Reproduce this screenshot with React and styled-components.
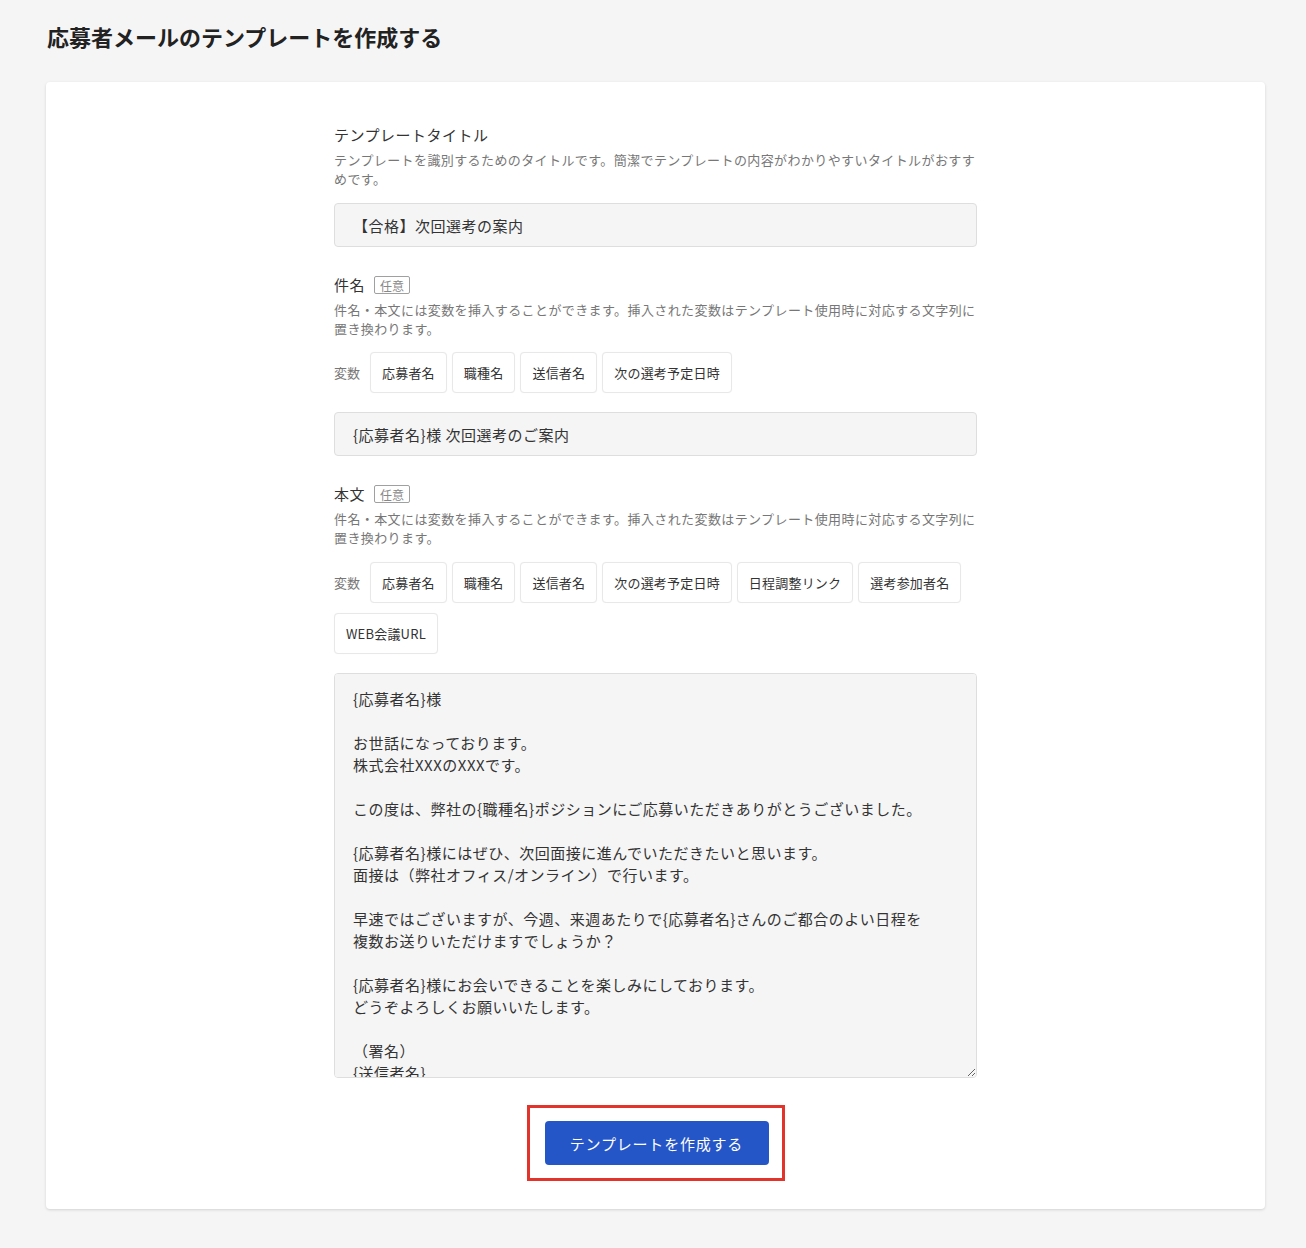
import React from "react";
import styled, { createGlobalStyle } from "styled-components";

const GlobalStyle = createGlobalStyle`
  html, body {
    margin: 0;
    padding: 0;
    background: #f5f5f5;
  }
  body {
    font-family: "Noto Sans CJK JP", "Noto Sans", "Liberation Sans", sans-serif;
    color: #333;
  }
  * { box-sizing: border-box; }
`;

const Page = styled.div`
  padding: 20px 41px 40px 46px;
  min-height: 1248px;
`;

const PageTitle = styled.h1`
  margin: 0 0 30px 1px;
  font-size: 22px;
  line-height: 32px;
  font-weight: 700;
  color: #222;
`;

const Card = styled.div`
  background: #fff;
  border-radius: 4px;
  box-shadow: 0 1px 3px rgba(0, 0, 0, 0.14);
  padding: 42px 0 28px;
  display: flex;
  flex-direction: column;
  align-items: center;
`;

const Form = styled.div`
  width: 643px;
  display: flex;
  flex-direction: column;
`;

const Section = styled.section`
  display: flex;
  flex-direction: column;
  & + & {
    margin-top: 27px;
  }
`;

const LabelRow = styled.div`
  display: flex;
  align-items: center;
  gap: 9px;
  height: 22px;
`;

const Label = styled.span`
  font-size: 15px;
  line-height: 22px;
  letter-spacing: 0.5px;
  color: #333;
`;

const Badge = styled.span`
  display: inline-flex;
  align-items: center;
  justify-content: center;
  width: 36px;
  height: 18px;
  border: 1px solid #a0a0a0;
  border-radius: 2px;
  font-size: 12px;
  color: #888;
`;

const Description = styled.p`
  margin: 4px 0 0;
  font-size: 13px;
  line-height: 19px;
  letter-spacing: 0.4px;
  color: #777;
`;

const TextInput = styled.div`
  margin-top: ${(p) => p.$top}px;
  height: 44px;
  display: flex;
  align-items: center;
  padding: 0 18px;
  background: #f5f5f5;
  border: 1px solid #dedede;
  border-radius: 4px;
  font-size: 15px;
  letter-spacing: 0.5px;
  color: #333;
`;

const VarRow = styled.div`
  margin-top: ${(p) => p.$top}px;
  display: flex;
  flex-wrap: wrap;
  align-items: center;
  column-gap: 5px;
  row-gap: 10px;
`;

const VarLabel = styled.span`
  font-size: 13px;
  color: #777;
  margin-right: 5px;
`;

const Chip = styled.button`
  height: 41px;
  padding: 0 11px;
  background: #fff;
  border: 1px solid #e8e8e8;
  border-radius: 4px;
  box-shadow: 0 0 1px rgba(0, 0, 0, 0.06);
  font-family: inherit;
  font-size: 13px;
  letter-spacing: 0.2px;
  color: #333;
  cursor: pointer;
`;

const BodyArea = styled.textarea`
  margin-top: 19px;
  height: 405px;
  width: 100%;
  padding: 14px 18px;
  background: #f5f5f5;
  border: 1px solid #dedede;
  border-radius: 4px;
  font-family: inherit;
  font-size: 15px;
  line-height: 22px;
  letter-spacing: 0.5px;
  color: #333;
  resize: vertical;
  outline: none;
  scrollbar-width: none;
  &::-webkit-scrollbar { display: none; }
`;

const Highlight = styled.div`
  margin-top: 27px;
  border: 3px solid #e3342b;
  padding: 13px 13px 13px 15px;
`;

const PrimaryButton = styled.button`
  width: 224px;
  height: 44px;
  border: none;
  border-radius: 4px;
  background: #2556c8;
  color: #fff;
  font-family: inherit;
  font-size: 15px;
  letter-spacing: 0.8px;
  cursor: pointer;
`;

const subjectVars = ["応募者名", "職種名", "送信者名", "次の選考予定日時"];
const bodyVars = [...subjectVars, "日程調整リンク", "選考参加者名", "WEB会議URL"];

const bodyText = `{応募者名}様

お世話になっております。
株式会社XXXのXXXです。

この度は、弊社の{職種名}ポジションにご応募いただきありがとうございました。

{応募者名}様にはぜひ、次回面接に進んでいただきたいと思います。
面接は（弊社オフィス/オンライン）で行います。

早速ではございますが、今週、来週あたりで{応募者名}さんのご都合のよい日程を
複数お送りいただけますでしょうか？

{応募者名}様にお会いできることを楽しみにしております。
どうぞよろしくお願いいたします。

（署名）
{送信者名}`;

const note =
  "件名・本文には変数を挿入することができます。挿入された変数はテンプレート使用時に対応する文字列に置き換わります。";

export default function App() {
  return (
    <>
      <GlobalStyle />
      <Page>
        <PageTitle>応募者メールのテンプレートを作成する</PageTitle>
        <Card>
          <Form>
            <Section>
              <LabelRow>
                <Label>テンプレートタイトル</Label>
              </LabelRow>
              <Description>
                テンプレートを識別するためのタイトルです。簡潔でテンプレートの内容がわかりやすいタイトルがおすすめです。
              </Description>
              <TextInput $top={15}>【合格】次回選考の案内</TextInput>
            </Section>

            <Section>
              <LabelRow>
                <Label>件名</Label>
                <Badge>任意</Badge>
              </LabelRow>
              <Description>{note}</Description>
              <VarRow $top={14}>
                <VarLabel>変数</VarLabel>
                {subjectVars.map((v) => (
                  <Chip key={v}>{v}</Chip>
                ))}
              </VarRow>
              <TextInput $top={19}>{"{応募者名}様 次回選考のご案内"}</TextInput>
            </Section>

            <Section>
              <LabelRow>
                <Label>本文</Label>
                <Badge>任意</Badge>
              </LabelRow>
              <Description>{note}</Description>
              <VarRow $top={15}>
                <VarLabel>変数</VarLabel>
                {bodyVars.map((v) => (
                  <Chip key={v}>{v}</Chip>
                ))}
              </VarRow>
              <BodyArea defaultValue={bodyText} />
            </Section>
          </Form>
          <Highlight>
            <PrimaryButton>テンプレートを作成する</PrimaryButton>
          </Highlight>
        </Card>
      </Page>
    </>
  );
}
